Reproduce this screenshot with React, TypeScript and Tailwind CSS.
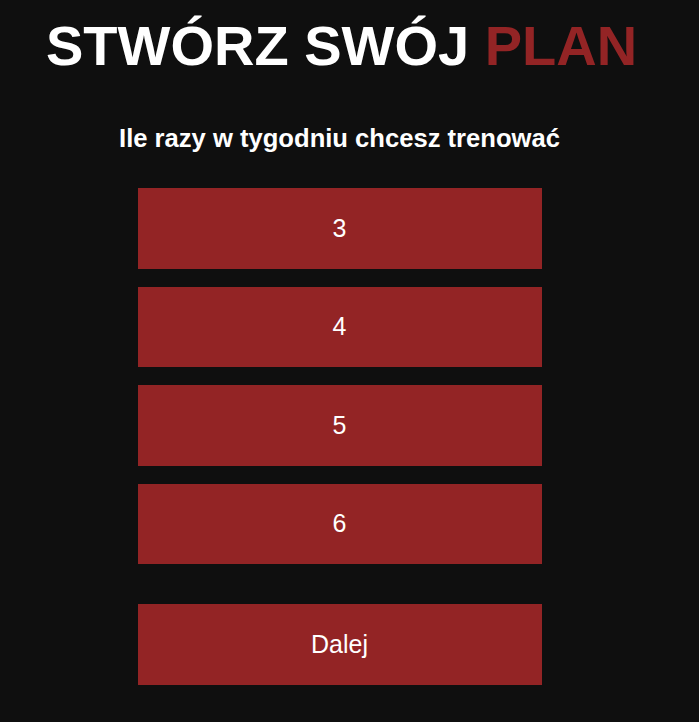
import React, { useState } from "react";

const options = [3, 4, 5, 6];

export default function App() {
  const [selected, setSelected] = useState<number | null>(null);

  return (
    <div className="min-h-[722px] bg-[#0f0f0f] font-['Liberation_Sans',Arial,sans-serif] text-white">
      <h1 className="pl-[46px] pt-[14px] text-[56px] font-bold leading-[64px]">
        STWÓRZ SWÓJ <span className="text-[#932425]">PLAN</span>
      </h1>

      <div className="flex flex-col items-center pr-[20px]">
        <h2 className="mt-[45px] text-[25.6px] font-bold leading-[30px]">
          Ile razy w tygodniu chcesz trenować
        </h2>

        <div className="mt-[35px] flex flex-col gap-[18px]">
          {options.map((n) => (
            <button
              key={n}
              onClick={() => setSelected(n)}
              className="h-[80.5px] w-[404px] bg-[#932425] text-[25px] text-white"
            >
              {n}
            </button>
          ))}
        </div>

        <button className="mt-[40px] h-[81px] w-[404px] bg-[#932425] text-[25px] text-white">
          Dalej
        </button>
      </div>
    </div>
  );
}
